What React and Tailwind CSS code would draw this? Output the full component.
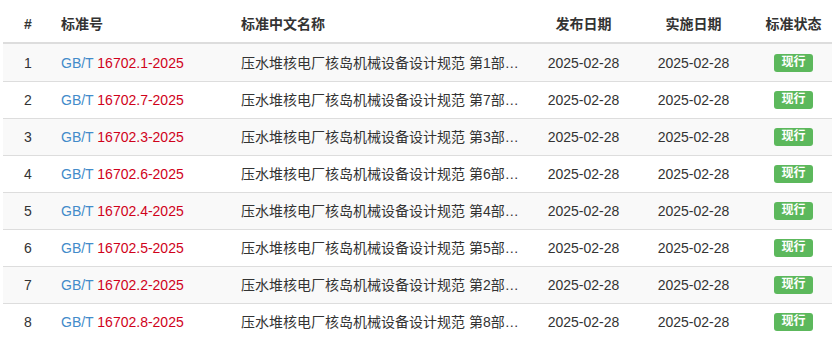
const rows = [
  { no: '16702.1-2025', part: '第1部分：通用要求' },
  { no: '16702.7-2025', part: '第7部分：阀门' },
  { no: '16702.3-2025', part: '第3部分：热交换器' },
  { no: '16702.6-2025', part: '第6部分：管道' },
  { no: '16702.4-2025', part: '第4部分：容器' },
  { no: '16702.5-2025', part: '第5部分：泵' },
  { no: '16702.2-2025', part: '第2部分：材料' },
  { no: '16702.8-2025', part: '第8部分：支承件' },
];

export default function App() {
  return (
    <div
      className="h-[340px] w-[832px] overflow-hidden bg-white pl-[3px] text-[14px] leading-5 text-[#333]"
      style={{ fontFamily: '"Liberation Sans", "Noto Sans CJK SC", sans-serif' }}
    >
      <table className="w-[829px] table-fixed border-separate border-spacing-0">
        <colgroup>
          <col className="w-[50px]" />
          <col className="w-[180px]" />
          <col className="w-[302px]" />
          <col className="w-[97px]" />
          <col className="w-[123px]" />
          <col className="w-[77px]" />
        </colgroup>
        <thead>
          <tr className="font-bold">
            <th className="border-b-2 border-[#ddd] px-2 pb-2 pt-[14px] text-center">#</th>
            <th className="border-b-2 border-[#ddd] px-2 pb-2 pt-[14px] text-left">标准号</th>
            <th className="border-b-2 border-[#ddd] px-2 pb-2 pt-[14px] text-left">标准中文名称</th>
            <th className="border-b-2 border-[#ddd] px-0 pb-2 pt-[14px] text-center">发布日期</th>
            <th className="border-b-2 border-[#ddd] px-0 pb-2 pt-[14px] text-center">实施日期</th>
            <th className="border-b-2 border-[#ddd] px-0 pb-2 pt-[14px] text-center">标准状态</th>
          </tr>
        </thead>
        <tbody>
          {rows.map((r, i) => {
            const cell = i > 0 ? 'h-[37px] border-t border-[#ddd] py-2' : 'h-[37px] pb-2 pt-[9px]';
            return (
              <tr key={r.no} className={i % 2 === 0 ? 'bg-[#f9f9f9]' : 'bg-white'}>
                <td className={`${cell} px-2 text-center`}>{i + 1}</td>
                <td className={`${cell} whitespace-nowrap px-2`}>
                  <span className="text-[#428bca]">GB/T </span>
                  <span className="text-[#d0021b]">{r.no}</span>
                </td>
                <td className={`${cell} truncate px-2`}>
                  压水堆核电厂核岛机械设备设计规范 {r.part}
                </td>
                <td className={`${cell} px-0 text-center`}>2025-02-28</td>
                <td className={`${cell} px-0 text-center`}>2025-02-28</td>
                <td className={`${cell} px-0`}>
                  <div className="flex h-5 items-center justify-center">
                    <span className="rounded-[3px] bg-[#5cb85c] px-[7px] pb-[4px] pt-[2px] text-[12px] font-bold leading-[12px] text-white">
                      现行
                    </span>
                  </div>
                </td>
              </tr>
            );
          })}
        </tbody>
      </table>
    </div>
  );
}
